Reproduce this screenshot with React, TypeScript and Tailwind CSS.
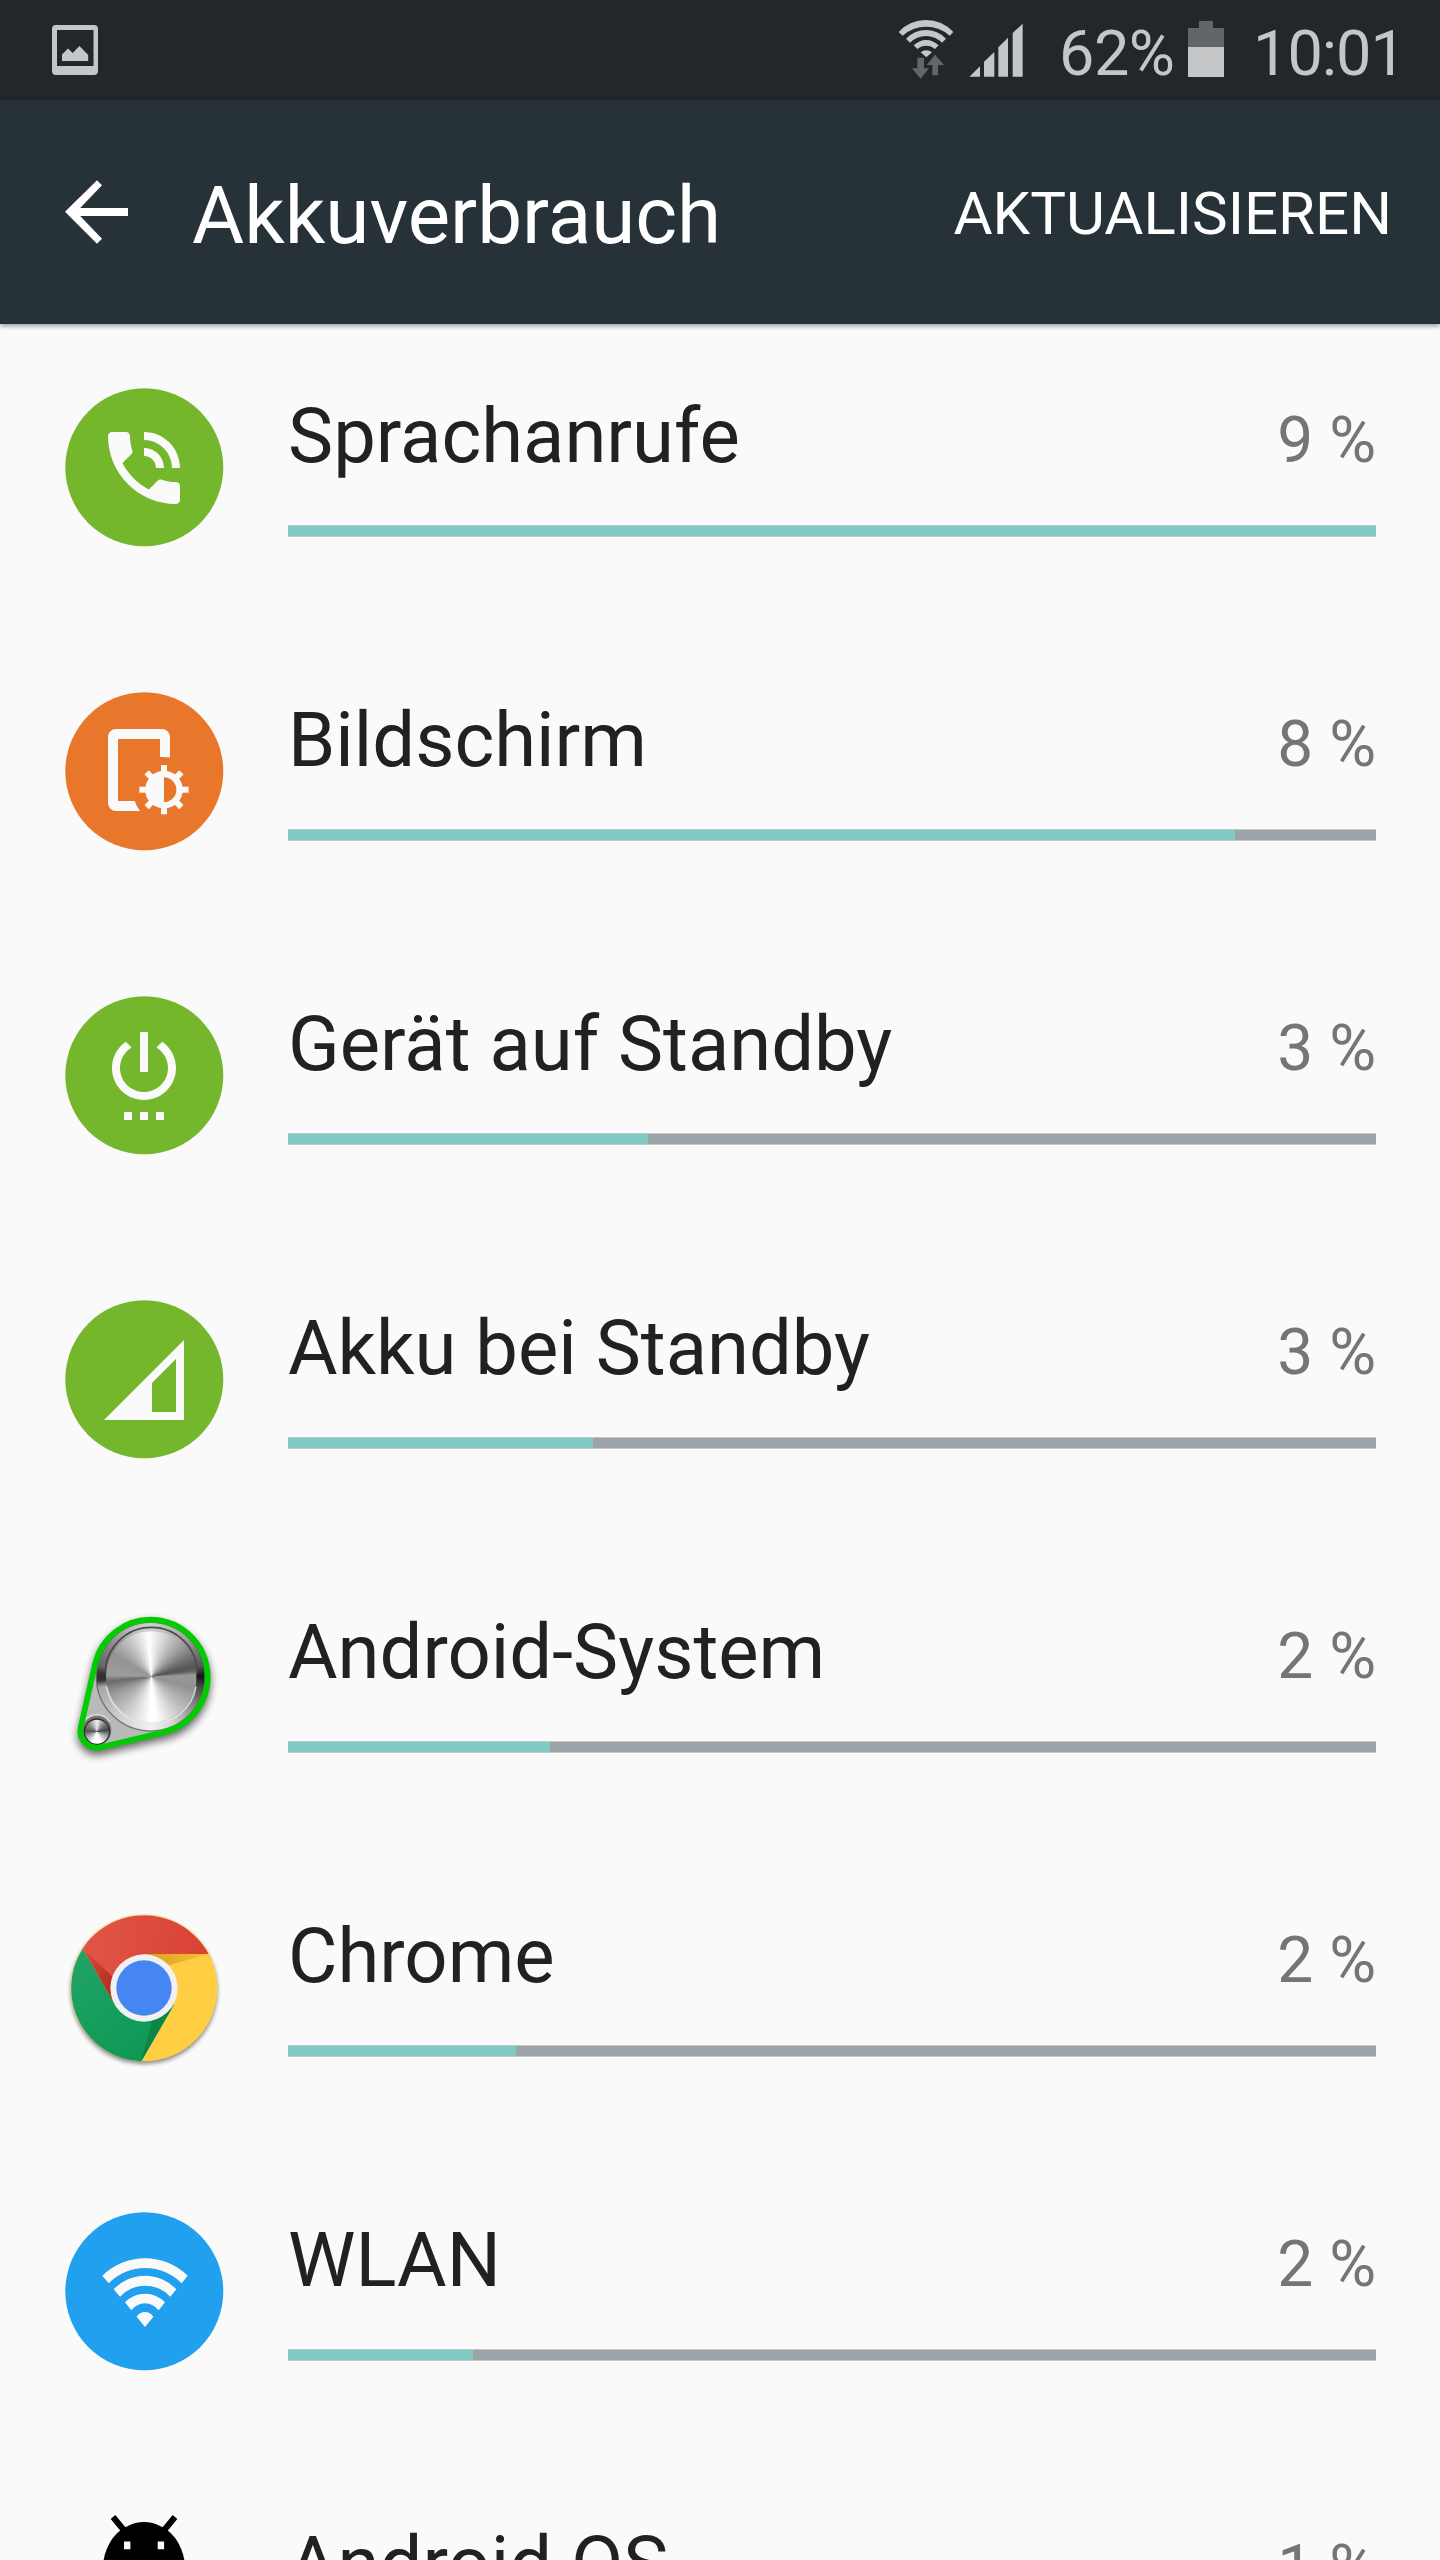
import type { ReactNode } from "react";

const Disc = ({ color }: { color: string }) => <circle cx="80.3" cy="80.3" r="79" fill={color} />;

const Icon = ({ children }: { children: ReactNode }) => (
  <svg viewBox="0 0 160 160" className="h-40 w-40 overflow-visible">
    {children}
  </svg>
);

const PhoneIcon = () => (
  <Icon>
    <Disc color="#74b62c" />
    <path
      transform="translate(32 33) scale(4)"
      fill="#fafafa"
      d="M20 15.5c-1.25 0-2.45-.2-3.57-.57-.35-.11-.74-.03-1.02.24l-2.2 2.2c-2.83-1.44-5.15-3.75-6.59-6.59l2.2-2.21c.28-.26.36-.65.25-1C8.7 6.45 8.5 5.25 8.5 4c0-.55-.45-1-1-1H4c-.55 0-1 .45-1 1 0 9.39 7.61 17 17 17 .55 0 1-.45 1-1v-3.5c0-.55-.45-1-1-1zM19 12h2c0-4.97-4.03-9-9-9v2c3.87 0 7 3.13 7 7zm-4 0h2c0-2.76-2.24-5-5-5v2c1.66 0 3 1.34 3 3z"
    />
  </Icon>
);

const teeth = [0, 45, 90, 135, 180, 225, 270, 315];

const ScreenIcon = () => (
  <Icon>
    <Disc color="#e8762b" />
    <path
      fill="#fafafa"
      d="M52 38H98a8 8 0 0 1 8 8V66.5Q101 65.7 96 66V48H54V110H70.7Q72.6 115.5 76 120H52a8 8 0 0 1-8-8V46a8 8 0 0 1 8-8z"
    />
    <g transform="translate(100 98.7)" fill="#fafafa">
      {teeth.map((a) => (
        <rect key={a} x="-3" y="-24.6" width="6" height="10" transform={`rotate(${a})`} />
      ))}
      <path fillRule="evenodd" d="M0-18.8a18.8 18.8 0 1 1 0 37.6a18.8 18.8 0 1 1 0-37.6zM0-12.4V12.4A12.4 12.4 0 0 0 0-12.4z" />
    </g>
  </Icon>
);

const PowerIcon = () => (
  <Icon>
    <Disc color="#74b62c" />
    <path
      transform="translate(32 29) scale(4)"
      fill="#fafafa"
      d="M7 24h2v-2H7v2zm4 0h2v-2h-2v2zm2-22h-2v10h2V2zm3.56 2.44l-1.45 1.45C16.84 6.94 18 8.83 18 11c0 3.31-2.69 6-6 6s-6-2.69-6-6c0-2.17 1.16-4.06 2.88-5.12L7.44 4.44C5.36 5.88 4 8.28 4 11c0 4.42 3.58 8 8 8s8-3.58 8-8c0-2.72-1.36-5.12-3.44-6.56zM15 24h2v-2h-2v2z"
    />
  </Icon>
);

const CellIcon = () => (
  <Icon>
    <Disc color="#74b62c" />
    <path fill="#fafafa" fillRule="evenodd" d="M40 121L120 41V121zM88 84V113H112V60z" />
  </Icon>
);

const BELT = "M135.3 222.2A171 171 0 1 1 341.8 426.4L152.6 471.6A50 50 0 0 1 92.2 412Z";

const PulleyIcon = () => (
  <Icon>
    <defs>
      <filter id="soft" x="-20%" y="-20%" width="140%" height="150%">
        <feGaussianBlur stdDeviation="12" />
      </filter>
    </defs>
    <g transform="translate(-14 -13) scale(.33333)">
      <path d={BELT} fill="#000" stroke="#000" strokeWidth="17" opacity=".6" filter="url(#soft)" transform="translate(0 14)" />
      <path d={BELT} fill="#b9b9b9" />
      <foreignObject x="139" y="97" width="326" height="326">
        <div className="h-full w-full rounded-full bg-[conic-gradient(#d0d0d0,#a8a8a8_40deg,#555_78deg,#141414_90deg,#444_100deg,#8a8a8a_125deg,#d5d5d5_155deg,#f2f2f2_180deg,#d0d0d0_215deg,#a8a8a8_258deg,#333_266deg,#333_274deg,#666_282deg,#8a8a8a_310deg,#c0c0c0_340deg,#d0d0d0)]" />
      </foreignObject>
      <circle cx="302" cy="260" r="163" fill="none" stroke="#555" strokeOpacity=".7" strokeWidth="4" />
      <foreignObject x="168" y="124" width="272" height="272">
        <div className="h-full w-full rounded-full bg-[conic-gradient(from_-4deg,#fff,#d8d8d8_20deg,#a6a6a6_45deg,#555_80deg,#606060_86deg,#999_92deg,#929292_110deg,#c4c4c4_145deg,#fff_178deg,#fff_186deg,#d0d0d0_215deg,#999_250deg,#6a6a6a_268deg,#9c9c9c_276deg,#949494_305deg,#c8c8c8_335deg,#fff)]" />
      </foreignObject>
      <path d="M166 250A138 138 0 0 1 442 250" fill="none" stroke="#4a4a4a" strokeWidth="5" />
      <path d="M170 290A136 136 0 0 0 438 290" fill="none" stroke="#e6e6e6" strokeOpacity=".8" strokeWidth="5" />
      <circle cx="141" cy="420" r="43" fill="#777" />
      <path d="M104 392A46 46 0 0 1 180 396" fill="none" stroke="#ddd" strokeWidth="4" />
      <foreignObject x="104" y="388" width="74" height="74">
        <div className="h-full w-full rounded-full bg-[conic-gradient(#eee,#888_40deg,#444_80deg,#999_110deg,#fff_160deg,#fff_200deg,#999_250deg,#555_272deg,#888_310deg,#eee)]" />
      </foreignObject>
      <circle cx="141" cy="425" r="38" fill="none" stroke="#333" strokeWidth="4" />
      <path d={BELT} fill="none" stroke="#0c0" strokeWidth="17" />
    </g>
  </Icon>
);

const ChromeIcon = () => (
  <Icon>
    <defs>
      <filter id="cs" x="-10%" y="-10%" width="120%" height="120%">
        <feGaussianBlur stdDeviation="6" />
      </filter>
      <linearGradient id="cr" x1="0" x2="1" y1=".4" y2=".5">
        <stop offset="0" stopColor="#e05547" />
        <stop offset="1" stopColor="#d94234" />
      </linearGradient>
      <linearGradient id="cg" x1="0" x2=".6" y1="0" y2="1">
        <stop offset="0" stopColor="#21a567" />
        <stop offset="1" stopColor="#0f9855" />
      </linearGradient>
      <linearGradient id="cdr" x1="0" x2="1" y1="0" y2="1">
        <stop offset="0" stopColor="#a3261b" stopOpacity=".1" />
        <stop offset="1" stopColor="#b02a1f" />
      </linearGradient>
      <linearGradient id="cdy" x1="0" x2="1" y1="0" y2="0">
        <stop offset="0" stopColor="#d9a11f" />
        <stop offset="1" stopColor="#f6c137" />
      </linearGradient>
    </defs>
    <g transform="translate(-14 -17) scale(.33333)">
      <circle cx="282" cy="302" r="220" opacity=".45" filter="url(#cs)" />
      <circle cx="282" cy="294" r="220" fill="#ffce43" />
      <path d="M98 176A220 220 0 0 0 274 514L372 344L282 294L187 330Z" fill="url(#cg)" />
      <path d="M98 176A220 220 0 0 1 476 192H282V294L187 330Z" fill="url(#cr)" />
      <path d="M98 176L187 330L190 262Z" fill="url(#cdr)" />
      <path d="M282 192H476L350 228Z" fill="url(#cdy)" />
      <path d="M366 354L274 514L308 385Z" fill="#0b8043" opacity=".8" />
      <circle cx="282" cy="294" r="101" fill="#f1f1f1" />
      <circle cx="282" cy="294" r="83" fill="#4586f3" />
    </g>
  </Icon>
);

const WifiIcon = () => (
  <Icon>
    <Disc color="#20a0ee" />
    <path
      transform="translate(-14 -16) scale(.33333)"
      fill="#fafafa"
      d="M157 242A183 183 0 0 1 413 242L395 265A153 153 0 0 0 176 265ZM191 283A129 129 0 0 1 379 283L361 305A103 103 0 0 0 210 305ZM225 322A82 82 0 0 1 345 322L326 346A50.5 50.5 0 0 0 244 346ZM260 365A29 29 0 0 1 310 365L285 396Z"
    />
  </Icon>
);

const AndroidIcon = () => (
  <Icon>
    <path d="M49 2L63 19M111 2L97 19" stroke="#000" strokeWidth="6" />
    <path d="M39 50C40 37 46 23 57 15Q60 12 64 11Q71 7 80 7Q89 7 96 11Q100 12 103 15C114 23 120 37 121 50V80H39Z" />
    <path fill="#fafafa" d="M60 26.5h6.4V34.3H60zM93.7 26.5h6.4V34.3H93.7z" />
  </Icon>
);

const items = [
  { name: "Sprachanrufe", percent: 9, fill: 100, icon: <PhoneIcon /> },
  { name: "Bildschirm", percent: 8, fill: 87, icon: <ScreenIcon /> },
  { name: "Gerät auf Standby", percent: 3, fill: 33.1, icon: <PowerIcon /> },
  { name: "Akku bei Standby", percent: 3, fill: 28, icon: <CellIcon /> },
  { name: "Android-System", percent: 2, fill: 24.1, icon: <PulleyIcon /> },
  { name: "Chrome", percent: 2, fill: 21, icon: <ChromeIcon /> },
  { name: "WLAN", percent: 2, fill: 17, icon: <WifiIcon /> },
  { name: "Android OS", percent: 1, fill: 15, icon: <AndroidIcon /> },
];

const StatusBar = () => (
  <div className="flex h-[100px] shrink-0 items-start bg-[#22272b] text-[63px] leading-[76px] text-[#c5c6c8]">
    <svg viewBox="0 0 46 50" className="mt-[25px] ml-[52px] h-[50px] w-[46px]" fill="#c5c6c8">
      <path fillRule="evenodd" d="M4 0H42a4 4 0 0 1 4 4V46a4 4 0 0 1-4 4H4a4 4 0 0 1-4-4V4a4 4 0 0 1 4-4zM5 5V41H41.5V5z" />
      <path d="M10 29.5L16 23.5L20.7 28L27.5 21L36.2 30V36H10z" />
    </svg>
    <svg viewBox="0 0 408 240" className="mt-[10px] ml-[792px] h-20 w-[136px]" fill="#c5c6c8">
      <path d="M26 66A111 111 0 0 1 190 66L179 77A105.5 105.5 0 0 0 38 77ZM48 86A82 82 0 0 1 168 86L156 98A67.6 67.6 0 0 0 60 98ZM71 106A52 52 0 0 1 146 106L135 117A40 40 0 0 0 82 117ZM92 127A27 27 0 0 1 126 127L109 142Z" />
      <path fill="#636668" d="M82 143H102V175H117L92 206L66 175H82ZM135 134L162 165H144V196H127V165H110Z" />
      <path d="M238 200L270 169V200ZM282 155L313 126V200H282ZM325 112L354 83V200H325ZM368 69L398 41V200H368Z" />
    </svg>
    <span className="mt-4 ml-[33px] w-[121px] tracking-[-0.5px]">62%</span>
    <svg viewBox="0 0 36 56" className="mt-[21px] ml-2 h-14 w-9">
      <path fill="#636668" d="M11 0H25V7H36V26H0V7H11z" />
      <path fill="#c5c6c8" d="M0 26H36V56H0z" />
    </svg>
    <span className="mt-4 ml-[29px] tracking-[-1px]">10:01</span>
  </div>
);

export default function App() {
  return (
    <div className="flex h-[2560px] w-[1440px] flex-col overflow-hidden bg-[#fafafa] font-['Roboto',sans-serif] whitespace-nowrap">
      <StatusBar />
      <header className="relative flex h-56 shrink-0 items-start bg-[#273238] text-white shadow-[0_2px_5px_rgba(0,0,0,0.4)]">
        <svg viewBox="0 0 63 64" className="mt-20 ml-[65px] h-16 w-[63px]" fill="#fff">
          <path d="M0 31.7L32 .3L37 5.3L15.2 28H63V36H15.2L37 58.7L32 63.7Z" />
        </svg>
        <h1 className="mt-[68px] ml-[64px] flex-1 text-[80px] leading-[96px]">Akkuverbrauch</h1>
        <button className="mt-[78px] mr-[48px] text-[60px] leading-[72px]">AKTUALISIEREN</button>
      </header>
      <ul className="shrink-0">
        {items.map((item) => (
          <li key={item.name} className="flex h-[304px] items-start pr-16 pl-16">
            <div className="mt-[63px] mr-16 shrink-0">{item.icon}</div>
            <div className="flex-1 pt-[68px]">
              <div className="flex h-[88px] items-baseline justify-between leading-[88px]">
                <span className="text-[76px] text-[#212121]">{item.name}</span>
                <span className="text-[64px] text-[#757575]">{item.percent} %</span>
              </div>
              <div className="mt-[45px] h-3 border-y border-[#c3c9ca] bg-[#9ea3a7]">
                <div className="h-full bg-[#80cbc4]" style={{ width: `${item.fill}%` }} />
              </div>
            </div>
          </li>
        ))}
      </ul>
    </div>
  );
}
